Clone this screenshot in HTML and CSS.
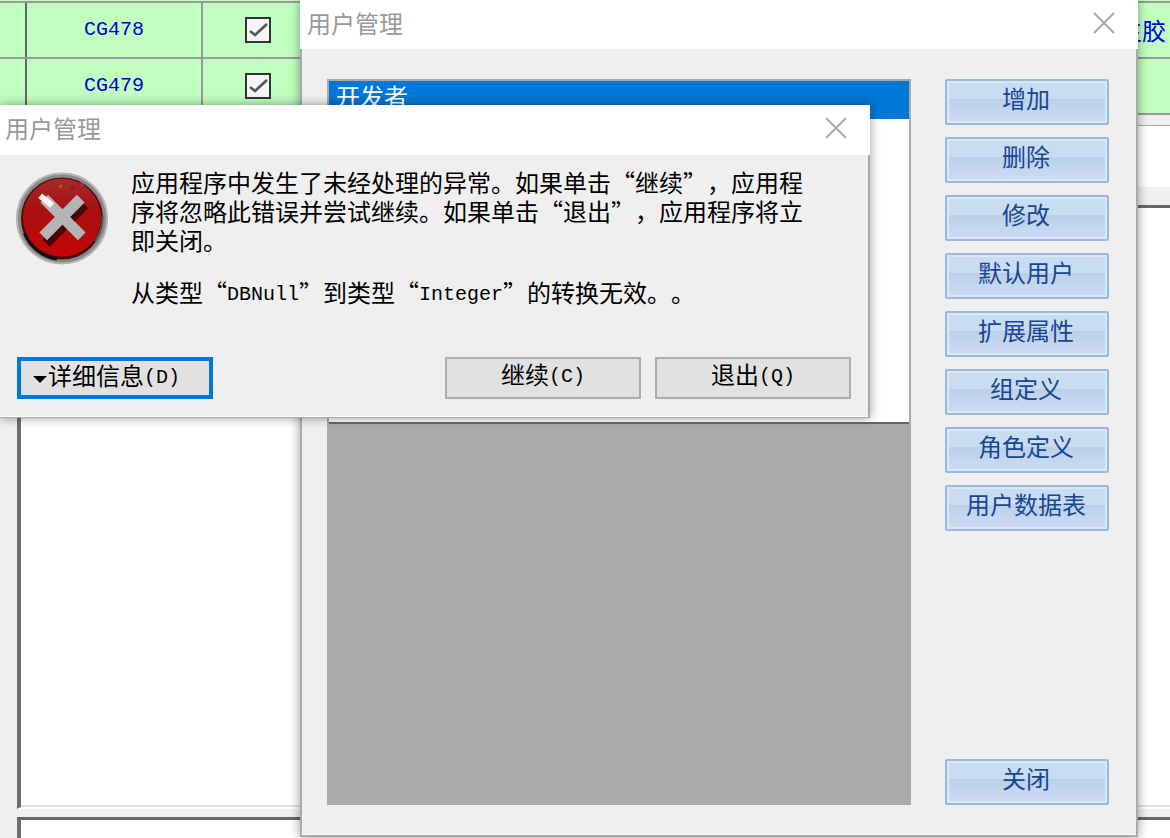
FILE: index.html
```html
<!DOCTYPE html>
<html lang="zh-CN">
<head>
    <meta charset="UTF-8">
    <meta name="viewport" content="width=device-width, initial-scale=1.0">
    <title>用户管理</title>
    <link rel="stylesheet" href="styles.css">
</head>
<body>
    <!-- the application behind the two dialogs -->
    <div class="app">
        <div class="grid">
            <div class="grid-row">
                <div class="cell"></div>
                <div class="cell code">CG478</div>
                <div class="cell check-cell">
                    <svg class="check" width="26" height="26" viewBox="0 0 26 26"><rect x="1" y="1" width="24" height="24" fill="#f4f4f4" stroke="#333" stroke-width="2"/><path d="M5 14l5 4 12-11" fill="none" stroke="#555" stroke-width="2.6"/></svg>
                </div>
                <div class="cell name">生胶</div>
            </div>
            <div class="grid-row">
                <div class="cell"></div>
                <div class="cell code">CG479</div>
                <div class="cell check-cell">
                    <svg class="check" width="26" height="26" viewBox="0 0 26 26"><rect x="1" y="1" width="24" height="24" fill="#f4f4f4" stroke="#333" stroke-width="2"/><path d="M5 14l5 4 12-11" fill="none" stroke="#555" stroke-width="2.6"/></svg>
                </div>
                <div class="cell name"></div>
            </div>
        </div>
        <div class="strip"></div>
        <div class="filter"></div>
        <div class="main-panel"></div>
        <div class="bottom-panel"></div>
    </div>

    <!-- user management window -->
    <div class="window window-users">
        <div class="title-bar">
            <span class="title">用户管理</span>
            <svg class="close" width="22" height="22" viewBox="0 0 22 22"><path d="M1 1l20 20M21 1L1 21" stroke="#aaa" stroke-width="2"/></svg>
        </div>
        <div class="users-body">
            <div class="user-list">
                <div class="user-items">
                    <div class="user-item selected">开发者</div>
                </div>
            </div>
            <div class="side-buttons">
                <button class="blue-btn">增加</button>
                <button class="blue-btn">删除</button>
                <button class="blue-btn">修改</button>
                <button class="blue-btn">默认用户</button>
                <button class="blue-btn">扩展属性</button>
                <button class="blue-btn">组定义</button>
                <button class="blue-btn">角色定义</button>
                <button class="blue-btn">用户数据表</button>
                <button class="blue-btn close-btn">关闭</button>
            </div>
        </div>
    </div>

    <!-- exception dialog -->
    <div class="window window-error">
        <div class="title-bar">
            <span class="title">用户管理</span>
            <svg class="close" width="22" height="22" viewBox="0 0 22 22"><path d="M1 1l20 20M21 1L1 21" stroke="#aaa" stroke-width="2"/></svg>
        </div>
        <div class="error-body">
            <div class="error-main">
                <svg class="error-icon" width="94" height="93" viewBox="0 0 94 94">
                    <defs>
                        <linearGradient id="redFill" x1="0" y1="0" x2="0" y2="1">
                            <stop offset="0" stop-color="#a52a2a"/>
                            <stop offset="0.4" stop-color="#a81010"/>
                            <stop offset="1" stop-color="#c40606"/>
                        </linearGradient>
                    </defs>
                    <circle cx="47" cy="47" r="45.5" fill="#8a8a8a" stroke="#b4b4b4" stroke-width="2"/>
                    <circle cx="47" cy="47" r="41.5" fill="#4a0c0c"/>
                    <circle cx="47" cy="46" r="39.5" fill="url(#redFill)"/>
                    <path d="M9 62A41 41 0 0 0 42 88" fill="none" stroke="#111" stroke-width="3"/>
                    <path d="M80 70A41 41 0 0 0 88 44" fill="none" stroke="#555" stroke-width="2"/>
                    <rect x="44" y="13" width="3" height="3" fill="#c05010"/>
                    <rect x="66" y="11" width="3" height="3" fill="#c02060"/>
                    <rect x="56" y="14" width="3" height="3" fill="#8a1a1a"/>
                    <path d="M31 72L70 33" stroke="#4a0606" stroke-width="10"/>
                    <path d="M29 27l38 38M66 27L28 65" stroke="#b4b4b4" stroke-width="11"/>
                    <path d="M25 24l12 10" stroke="#f4f4f4" stroke-width="6"/>
                </svg>
                <div class="error-text">
                    <p>应用程序中发生了未经处理的异常。如果单击“继续”，应用程<br>序将忽略此错误并尝试继续。如果单击“退出”，应用程序将立<br>即关闭。</p>
                    <p class="error-detail">从类型“<span class="latin">DBNull</span>”到类型“<span class="latin">Integer</span>”的转换无效。。</p>
                </div>
            </div>
            <div class="error-actions">
                <button class="gray-btn details-btn"><span class="arrow"></span>详细信息<span class="latin">(D)</span></button>
                <div class="action-group">
                    <button class="gray-btn">继续<span class="latin">(C)</span></button>
                    <button class="gray-btn">退出<span class="latin">(Q)</span></button>
                </div>
            </div>
        </div>
    </div>
</body>
</html>
```

FILE: styles.css
```css
body {
    margin: 0;
    width: 1170px;
    height: 838px;
    overflow: hidden;
    background: #f0f0f0;
    font-family: "Noto Sans CJK SC", sans-serif;
    font-size: 24px;
    color: #000;
    font-variant-east-asian: full-width;
    text-spacing-trim: space-all;
}

p {
    margin: 0;
}

button {
    font-family: inherit;
    font-size: 24px;
    line-height: 28px;
    padding: 0;
    cursor: pointer;
}

.latin {
    font-family: "Liberation Mono", monospace;
    font-size: 20px;
    vertical-align: 2px;
}

/* background application */
.app {
    display: flex;
    flex-direction: column;
    height: 838px;
}

.grid {
    height: 115px;
    box-sizing: border-box;
    padding-top: 1px;
    background: #c0ffc0;
}

.grid-row {
    display: grid;
    grid-template-columns: 27px 176px 112px 855px;
    height: 54px;
    border-bottom: 2px solid #999;
}

.grid-row:first-child {
    border-top: 2px solid #999;
}

.cell {
    display: flex;
    align-items: center;
    justify-content: center;
    border-right: 2px solid #999;
    box-sizing: border-box;
}

.cell:first-child {
    border-right-color: #666;
}

.code {
    font-family: "Liberation Mono", monospace;
    font-size: 20px;
    padding-bottom: 2px;
    color: #0000d8;
}

.name {
    justify-content: flex-end;
    padding: 0 4px 2px 0;
    color: #0000d8;
    border-right: 0;
}

.strip {
    height: 10px;
}

.filter {
    height: 61px;
    background: #fff;
    border-top: 1px solid #aaa;
}

.main-panel {
    flex: 1;
    margin: 18px 0 8px 17px;
    background: #fff;
    border-top: 3px solid #666;
    border-left: 4px solid #6f6f6f;
    border-bottom: 2px solid #fff;
    box-shadow: inset 0 -2px 0 #e0e0e0;
}

.bottom-panel {
    height: 18px;
    margin-left: 17px;
    background: #fff;
    border-top: 3px solid #666;
    border-left: 4px solid #6f6f6f;
}

/* windows */
.window {
    position: absolute;
    display: flex;
    flex-direction: column;
    background: #efefef;
    box-shadow: 0 0 10px rgba(0, 0, 0, 0.4);
}

.window-users {
    left: 300px;
    top: 0;
    width: 838px;
    height: 837px;
}

.window-error {
    left: 0;
    top: 105px;
    width: 870px;
    height: 313px;
}

.title-bar {
    display: flex;
    align-items: center;
    justify-content: space-between;
    flex: none;
    background: #fff;
    height: 49px;
    padding: 0 23px 3px 7px;
    box-sizing: border-box;
}

.window-error .title-bar {
    height: 50px;
    padding: 0 23px 5px 5px;
}

.title {
    color: #999;
    line-height: 30px;
}

/* user list window */
.users-body {
    flex: 1;
    display: flex;
    gap: 34px;
    padding: 30px 27px 30px 25px;
    border: 2px solid #aaa;
    border-top: 0;
    box-shadow: inset 0 -1px 0 #fff;
}

.user-list {
    flex: 1;
    display: flex;
    flex-direction: column;
    background: #aaa;
    border: 2px solid #aaa;
}

.user-items {
    height: 341px;
    background: #fff;
    border-bottom: 2px solid #666;
}

.user-item {
    height: 38px;
    line-height: 30px;
    padding-left: 7px;
}

.selected {
    background: #0078d7;
    color: #fff;
}

.side-buttons {
    display: flex;
    flex-direction: column;
    gap: 12px;
    width: 164px;
}

.blue-btn {
    flex: none;
    height: 46px;
    padding: 0 2px 8px 0;
    color: #1a4590;
    border: 2px solid #9ab8dc;
    border-radius: 2px;
    box-shadow: inset 0 0 0 2px #d8e7f9;
    background: linear-gradient(to bottom, #c8dcf2 0, #c8dcf2 18px, #bbd0e8 18px, #c9dcf3 40px);
}

.close-btn {
    margin-top: auto;
}

/* exception dialog */
.error-body {
    flex: 1;
    display: flex;
    flex-direction: column;
    justify-content: space-between;
    padding: 12px 17px 18px 15px;
    border-right: 2px solid #aaa;
    border-bottom: 1px solid #aaa;
    box-shadow: inset 0 -1px 0 #fff;
}

.error-main {
    display: flex;
    gap: 22px;
}

.error-icon {
    flex: none;
    margin-top: 5px;
}

.error-text {
    line-height: 29px;
}

.error-detail {
    margin-top: 23px;
}

.error-actions {
    display: flex;
    justify-content: space-between;
    padding-left: 2px;
}

.action-group {
    display: flex;
    gap: 14px;
}

.gray-btn {
    width: 196px;
    height: 42px;
    padding-bottom: 6px;
    background: #e1e1e1;
    border: 2px solid #adadad;
}

.details-btn {
    text-align: left;
    padding-left: 12px;
    border: 4px solid #0078d7;
}

.arrow {
    display: inline-block;
    width: 0;
    height: 0;
    margin-right: 1px;
    vertical-align: 2px;
    border-left: 7px solid transparent;
    border-right: 7px solid transparent;
    border-top: 7px solid #000;
}
```
